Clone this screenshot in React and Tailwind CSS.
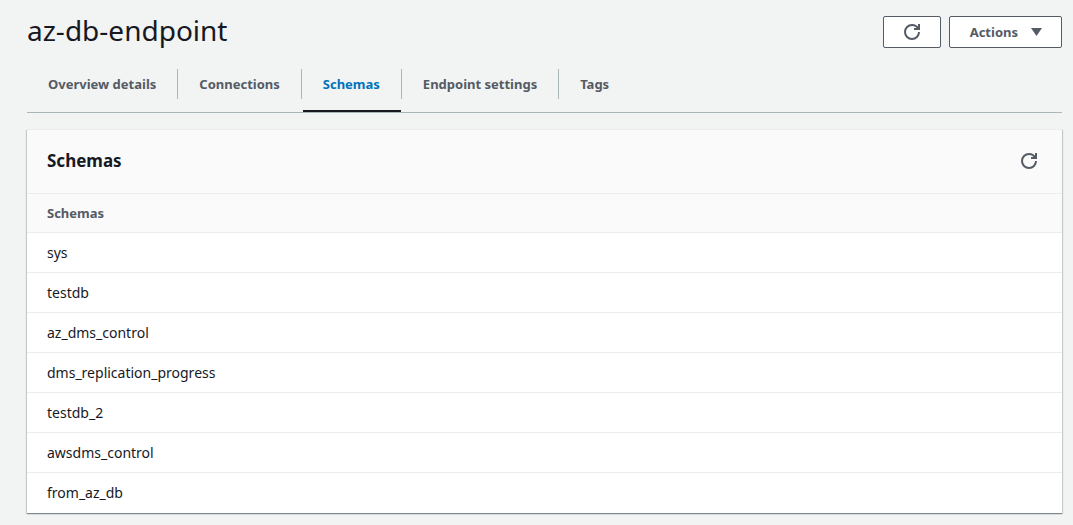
import React from 'react';

const tabs = ['Overview details', 'Connections', 'Schemas', 'Endpoint settings', 'Tags'];

const schemas = [
  'sys',
  'testdb',
  'az_dms_control',
  'dms_replication_progress',
  'testdb_2',
  'awsdms_control',
  'from_az_db',
];

function RefreshIcon() {
  return (
    <svg viewBox="0 0 16 16" className="size-4" fill="none" stroke="currentColor" strokeWidth="2" aria-hidden="true">
      <path d="M15 8c0 3.87-3.13 7-7 7s-7-3.13-7-7 3.13-7 7-7c2.79 0 5.2 1.63 6.33 4" />
      <path d="M10 5h5V0" />
    </svg>
  );
}

function Tab({ label, active, last }) {
  return (
    <button
      type="button"
      role="tab"
      aria-selected={active}
      className={`flex h-[43px] flex-col text-[13px] leading-[30px] font-bold ${active ? 'text-[#0073bb]' : 'text-[#545b64]'}`}
    >
      <span className={`h-[30px] border-r px-[21px] ${last ? 'border-transparent' : 'border-[#aab7b8]'}`}>{label}</span>
      {active && <span className="mx-px mt-[11px] h-0.5 self-stretch bg-[#16191f]" />}
    </button>
  );
}

export default function App() {
  return (
    <main className="min-h-screen bg-[#f2f3f3] pt-3.5 pr-[11px] pb-3 pl-[27px] font-['Noto_Sans',sans-serif] text-sm text-[#16191f]">
      <header className="flex items-start justify-between">
        <h1 className="text-[28px] leading-8">az-db-endpoint</h1>
        <div className="flex gap-2 pt-0.5 text-[13px] font-bold text-[#545b64]">
          <button
            type="button"
            aria-label="Refresh endpoint"
            className="flex h-8 w-[58px] items-center justify-center rounded-xs border border-[#545b64] bg-white"
          >
            <RefreshIcon />
          </button>
          <button
            type="button"
            className="flex h-8 items-center gap-[13px] rounded-xs border border-[#545b64] bg-white pr-[19px] pl-5"
          >
            Actions
            <svg viewBox="0 0 11 8" className="h-2 w-[11px]" fill="currentColor" aria-hidden="true">
              <path d="M0 0h11L5.5 8z" />
            </svg>
          </button>
        </div>
      </header>

      <nav role="tablist" className="mt-[21px] flex border-b border-[#aab7b8]">
        {tabs.map((label, i) => (
          <Tab key={label} label={label} active={label === 'Schemas'} last={i === tabs.length - 1} />
        ))}
      </nav>

      <section className="mt-4 border-t border-[#eaeded] bg-white shadow-[0_1px_1px_0_rgba(0,28,36,0.3),1px_1px_1px_0_rgba(0,28,36,0.15),-1px_1px_1px_0_rgba(0,28,36,0.15)]">
        <div className="flex h-16 items-center justify-between border-b border-[#eaeded] bg-[#fafafa] pr-[25px] pb-0.5 pl-5">
          <h2 className="text-[17px] leading-6 font-bold">Schemas</h2>
          <button type="button" aria-label="Refresh schemas" className="text-[#545b64]">
            <RefreshIcon />
          </button>
        </div>
        <table className="w-full border-separate border-spacing-0 text-left">
          <thead>
            <tr className="h-[39px] bg-[#fafafa]">
              <th className="border-b border-[#eaeded] px-5 text-[13px] font-bold text-[#545b64]">Schemas</th>
            </tr>
          </thead>
          <tbody>
            {schemas.map((name) => (
              <tr key={name} className="group h-10">
                <td className="border-b border-[#eaeded] px-5 group-last:border-transparent">{name}</td>
              </tr>
            ))}
          </tbody>
        </table>
      </section>
    </main>
  );
}
